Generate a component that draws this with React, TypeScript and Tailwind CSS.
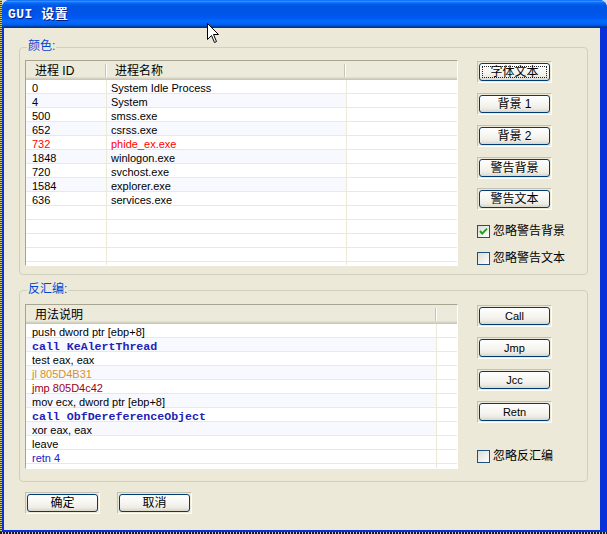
import React from "react";

const sans = "font-['Liberation_Sans','Noto_Sans_CJK_SC',sans-serif]";
const cjk = "font-['Liberation_Sans','Noto_Sans_CJK_SC',sans-serif] text-[12px] leading-[13px]";
const mono = "font-['Liberation_Mono','Noto_Sans_CJK_SC',monospace]";

function XPButton({ children, w = 75, focus = false }: { children: React.ReactNode; w?: number; focus?: boolean }) {
  return (
    <div
      className="h-[22px] shrink-0 border border-t-[#C5C1AF] border-l-[#C5C1AF] border-r-white border-b-white p-[1px]"
      style={{ width: w }}
    >
      <div className="h-full rounded-[3px] border border-[#003C74] bg-[linear-gradient(to_bottom,#FFFFFF_0%,#F5F4EF_55%,#ECEBE4_80%,#D8D5C8_100%)] p-[2px]">
        <div
          className={
            "w-full h-full flex items-center justify-center text-black " +
            cjk +
            (focus ? " border border-dotted border-[#222]" : " border border-transparent")
          }
        >
          {children}
        </div>
      </div>
    </div>
  );
}

function CheckBox({ checked, label, className = "" }: { checked: boolean; label: string; className?: string }) {
  return (
    <div className={"flex items-center h-[13px] " + className}>
      <div className="w-[13px] h-[13px] shrink-0 border border-[#1C5180] bg-[linear-gradient(135deg,#DCDCD7,#FFFFFF)] flex items-center justify-center">
        {checked && (
          <svg width="11" height="11" viewBox="0 0 11 11">
            <path d="M2 5 L4.2 7.6 L9 2.6" fill="none" stroke="#21A121" strokeWidth="2" />
          </svg>
        )}
      </div>
      <span className={"ml-[3px] text-black whitespace-nowrap " + cjk}>{label}</span>
    </div>
  );
}

function GroupBox({ label, h, children, className = "" }: { label: string; h: number; children: React.ReactNode; className?: string }) {
  return (
    <div className={"relative border border-[#D0D0BF] rounded-[4px] " + className} style={{ height: h }}>
      <span className={"absolute left-[7px] top-[-8px] px-[1px] bg-[#ECE9D8] text-[#0046D5] " + cjk}>{label}</span>
      {children}
    </div>
  );
}

const headerBg =
  "bg-[linear-gradient(to_bottom,#EBEADB_0px,#EBEADB_16px,#E2DECD_16px,#E2DECD_17px,#D6D2C2_17px,#D6D2C2_18px,#CBC7B8_18px,#CBC7B8_19px)]";

function HeaderSep() {
  return (
    <div className="flex shrink-0 mt-[3px] h-[13px]">
      <div className="w-[1px] h-full bg-[#C7C5B2]" />
      <div className="w-[1px] h-full bg-white" />
    </div>
  );
}

type Proc = { id: string; name: string; color?: string };
const procs: Proc[] = [
  { id: "0", name: "System Idle Process" },
  { id: "4", name: "System" },
  { id: "500", name: "smss.exe" },
  { id: "652", name: "csrss.exe" },
  { id: "732", name: "phide_ex.exe", color: "text-[#FF0000]" },
  { id: "1848", name: "winlogon.exe" },
  { id: "720", name: "svchost.exe" },
  { id: "1584", name: "explorer.exe" },
  { id: "636", name: "services.exe" },
  { id: "", name: "" },
  { id: "", name: "" },
  { id: "", name: "" },
  { id: "", name: "" },
  { id: "", name: "" },
];

type Asm = { text: string; cls: string };
const asm: Asm[] = [
  { text: "push dword ptr [ebp+8]", cls: sans + " text-[11px] text-black" },
  { text: "call KeAlertThread", cls: mono + " text-[11.6px] font-bold text-[#2222B8]" },
  { text: "test eax, eax", cls: sans + " text-[11px] text-black" },
  { text: "jl 805D4B31", cls: sans + " text-[11px] text-[#D4922C]" },
  { text: "jmp 805D4c42", cls: sans + " text-[11px] text-[#A00018]" },
  { text: "mov ecx, dword ptr [ebp+8]", cls: sans + " text-[11px] text-black" },
  { text: "call ObfDereferenceObject", cls: mono + " text-[11.6px] font-bold text-[#2222B8]" },
  { text: "xor eax, eax", cls: sans + " text-[11px] text-black" },
  { text: "leave", cls: sans + " text-[11px] text-black" },
  { text: "retn 4", cls: sans + " text-[11px] text-[#2222C8]" },
  { text: "", cls: sans + " text-[11px]" },
];

function ProcList() {
  return (
    <div className="w-[433px] h-[206px] shrink-0 flex flex-col overflow-hidden bg-white border border-t-[#A7A491] border-l-[#A7A491] border-r-white border-b-white">
      <div className={"h-[19px] shrink-0 flex items-start " + headerBg}>
        <div className={"w-[79px] h-[19px] pt-[1px] flex items-center pl-[9px] text-black " + cjk}>进程 ID</div>
        <HeaderSep />
        <div className={"w-[237px] h-[19px] pt-[1px] flex items-center pl-[8px] text-black " + cjk}>进程名称</div>
        <HeaderSep />
        <div className="flex-1" />
      </div>
      {procs.map((p, i) => {
        const lav = i < 8 && i % 2 === 1 ? "bg-[#F8F8FF]" : "bg-white";
        return (
          <div key={i} className="h-[14px] shrink-0 flex border-b border-[#ECE9D8]">
            <div className={"w-[81px] shrink-0 border-r border-[#ECE9D8] pl-[6px] pt-[3px] leading-[11px] text-[11px] whitespace-nowrap " + sans + " " + lav + " " + (p.color ?? "text-black")}>
              {p.id}
            </div>
            <div className={"w-[240px] shrink-0 border-r border-[#ECE9D8] pl-[4px] pt-[3px] leading-[11px] text-[11px] whitespace-nowrap " + sans + " " + lav + " " + (p.color ?? "text-black")}>
              {p.name}
            </div>
            <div className="flex-1 bg-white" />
          </div>
        );
      })}
    </div>
  );
}

function AsmList() {
  return (
    <div className="w-[433px] h-[165px] shrink-0 flex flex-col overflow-hidden bg-white border border-t-[#A7A491] border-l-[#A7A491] border-r-white border-b-white">
      <div className={"h-[19px] shrink-0 flex items-start " + headerBg}>
        <div className={"w-[409px] h-[19px] pt-[1px] flex items-center pl-[9px] text-black " + cjk}>用法说明</div>
        <HeaderSep />
        <div className="flex-1" />
      </div>
      {asm.map((a, i) => {
        const lav = i < 8 && i % 2 === 1 ? "bg-[#F8F8FF]" : "bg-white";
        return (
          <div key={i} className="h-[14px] shrink-0 flex border-b border-[#ECE9D8]">
            <div className={"w-[411px] shrink-0 border-r border-[#ECE9D8] pl-[6px] pt-[3px] leading-[11px] whitespace-nowrap " + lav + " " + a.cls}>
              {a.text}
            </div>
            <div className="flex-1 bg-white" />
          </div>
        );
      })}
    </div>
  );
}

function Cursor() {
  return (
    <svg className="absolute left-[207px] top-[23px]" width="13" height="21" viewBox="0 0 13 21">
      <path d="M0.5 0.5 L0.5 16.5 L4.5 12.5 L7.5 19.5 L9.5 18.5 L6.5 11.5 L11.5 11.5 Z" fill="#FFFFFF" stroke="#000000" strokeWidth="1" />
    </svg>
  );
}

export default function App() {
  return (
    <div className="relative w-[607px] h-[534px] overflow-hidden flex flex-col bg-[#CFDCF2]">
      <div className="flex h-[532px] shrink-0">
        <div className="w-[2px] h-full bg-[repeating-linear-gradient(to_bottom,#D2C86A_0px,#D2C86A_1px,#2A3C8C_1px,#2A3C8C_2px)]" />
        <div className="flex-1 flex flex-col bg-[#0831D9] rounded-t-[8px] overflow-hidden">
          {/* Title bar */}
          <div className="h-[28px] shrink-0 flex items-center pl-[6px] pt-[2px] bg-[linear-gradient(to_bottom,#0058EE_0%,#3593FF_4%,#288EFF_6%,#127DFF_8%,#036FFC_10%,#0262EE_14%,#0057E5_20%,#0054E3_24%,#0055EB_56%,#005BF5_66%,#026AFE_76%,#0062EF_86%,#0052D6_92%,#0040AB_94%,#003092_100%)]">
            <span className={"text-white font-bold text-[13px] leading-[14px] tracking-[0.5px] [text-shadow:1px_1px_0_#0A1883] " + mono}>
              GUI 设置
            </span>
          </div>
          {/* Body */}
          <div className="flex-1 flex pl-[2px] pr-[7px] pb-[2px]">
            <div className="flex-1 bg-[#ECE9D8] flex flex-col pl-[15px] pr-[12px] pt-[19px]">
              <GroupBox label="颜色:" h={228}>
                <div className="flex pl-[5px] pt-[12px]">
                  <ProcList />
                  <div className="ml-[19px] pt-[1px] flex flex-col">
                    <XPButton focus>字体文本</XPButton>
                    <div className="mt-[10px]"><XPButton>背景 1</XPButton></div>
                    <div className="mt-[10px]"><XPButton>背景 2</XPButton></div>
                    <div className="mt-[10px]"><XPButton>警告背景</XPButton></div>
                    <div className="mt-[9px]"><XPButton>警告文本</XPButton></div>
                    <CheckBox checked label="忽略警告背景" className="mt-[15px]" />
                    <CheckBox checked={false} label="忽略警告文本" className="mt-[14px]" />
                  </div>
                </div>
              </GroupBox>
              <GroupBox label="反汇编:" h={192} className="mt-[15px]">
                <div className="flex pl-[5px] pt-[13px]">
                  <AsmList />
                  <div className="ml-[19px] pt-[1px] flex flex-col">
                    <XPButton><span className={sans + " text-[11px]"}>Call</span></XPButton>
                    <div className="mt-[10px]"><XPButton><span className={sans + " text-[11px]"}>Jmp</span></XPButton></div>
                    <div className="mt-[10px]"><XPButton><span className={sans + " text-[11px]"}>Jcc</span></XPButton></div>
                    <div className="mt-[10px]"><XPButton><span className={sans + " text-[11px]"}>Retn</span></XPButton></div>
                    <CheckBox checked={false} label="忽略反汇编" className="mt-[27px]" />
                  </div>
                </div>
              </GroupBox>
              <div className="flex mt-[10px] ml-[6px]">
                <XPButton>确定</XPButton>
                <div className="ml-[17px]"><XPButton>取消</XPButton></div>
              </div>
            </div>
          </div>
        </div>
      </div>
      <div className="h-[2px] shrink-0 bg-[repeating-linear-gradient(to_right,#1A1A2A_0px,#1A1A2A_2px,#C8C8D0_2px,#C8C8D0_3px)]" />
      <Cursor />
    </div>
  );
}
